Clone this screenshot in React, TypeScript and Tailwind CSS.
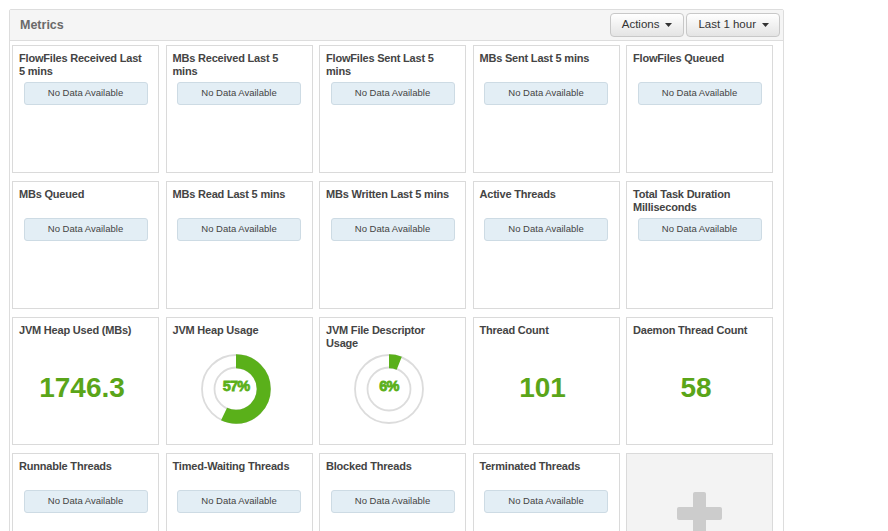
import React from "react";

type Card =
  | { title: string; kind: "nodata" }
  | { title: string; kind: "value"; value: string }
  | { title: string; kind: "gauge"; pct: number }
  | { title: string; kind: "add" };

const cards: Card[] = [
  { title: "FlowFiles Received Last 5 mins", kind: "nodata" },
  { title: "MBs Received Last 5 mins", kind: "nodata" },
  { title: "FlowFiles Sent Last 5 mins", kind: "nodata" },
  { title: "MBs Sent Last 5 mins", kind: "nodata" },
  { title: "FlowFiles Queued", kind: "nodata" },
  { title: "MBs Queued", kind: "nodata" },
  { title: "MBs Read Last 5 mins", kind: "nodata" },
  { title: "MBs Written Last 5 mins", kind: "nodata" },
  { title: "Active Threads", kind: "nodata" },
  { title: "Total Task Duration Milliseconds", kind: "nodata" },
  { title: "JVM Heap Used (MBs)", kind: "value", value: "1746.3" },
  { title: "JVM Heap Usage", kind: "gauge", pct: 57 },
  { title: "JVM File Descriptor Usage", kind: "gauge", pct: 6 },
  { title: "Thread Count", kind: "value", value: "101" },
  { title: "Daemon Thread Count", kind: "value", value: "58" },
  { title: "Runnable Threads", kind: "nodata" },
  { title: "Timed-Waiting Threads", kind: "nodata" },
  { title: "Blocked Threads", kind: "nodata" },
  { title: "Terminated Threads", kind: "nodata" },
  { title: "", kind: "add" },
];

function Gauge({ pct }: { pct: number }) {
  const r = 27.75;
  const c = 2 * Math.PI * r;
  return (
    <svg width="72" height="72" viewBox="0 0 72 72">
      <circle cx="36" cy="36" r="34" fill="#fff" stroke="#dcdcdc" strokeWidth="1.8" />
      <circle cx="36" cy="36" r="21.5" fill="#fff" stroke="#dcdcdc" strokeWidth="1.8" />
      <circle
        cx="36"
        cy="36"
        r={r}
        fill="none"
        stroke="#5ab01a"
        strokeWidth="14"
        strokeDasharray={`${(pct / 100) * c} ${c}`}
        transform="rotate(-90 36 36)"
      />
      <text
        x="36"
        y="38"
        textAnchor="middle"
        fontFamily="'Liberation Sans', Arial, sans-serif"
        fontWeight="bold"
        fontSize="14.5"
        letterSpacing="-0.8"
        fill="#5ab01a"
        stroke="#5ab01a"
        strokeWidth="0.8"
      >
        {pct}%
      </text>
    </svg>
  );
}

function Caret() {
  return (
    <svg width="7" height="4" viewBox="0 0 7 4" className="ml-[6px]">
      <path d="M0 0 L7 0 L3.5 4 Z" fill="#333" />
    </svg>
  );
}

function MetricCard({ card }: { card: Card }) {
  if (card.kind === "add") {
    return (
      <div className="h-[128px] border border-[#dadada] bg-[#f3f3f3] flex justify-center">
        <div className="relative mt-[38px] w-[45px] h-[45px]">
          <div className="absolute left-[16px] top-0 w-[13px] h-[45px] rounded-[2px] bg-[#cccccc]" />
          <div className="absolute left-0 top-[15px] w-[45px] h-[13px] rounded-[2px] bg-[#cccccc]" />
        </div>
      </div>
    );
  }
  return (
    <div className="h-[128px] border border-[#dadada] bg-white pl-[6px] pr-[6px] pt-[6px] flex flex-col">
      <div className="h-[26px] pr-[4px] text-[11px] leading-[13px] tracking-[-0.2px] font-bold text-[#444]">
        {card.title}
      </div>
      {card.kind === "nodata" && (
        <div className="mt-[4px] mx-auto w-[124px] h-[23px] rounded-[3px] border border-[#cddbe4] bg-[#e3eef5] flex items-center justify-center text-[9.5px] text-[#444]">
          No Data Available
        </div>
      )}
      {card.kind === "value" && (
        <div className="mt-[22px] pr-[7px] text-center text-[28px] leading-[32px] font-bold text-[#5aa519]">
          {card.value}
        </div>
      )}
      {card.kind === "gauge" && (
        <div className="mt-[3px] pr-[7px] flex justify-center">
          <Gauge pct={card.pct} />
        </div>
      )}
    </div>
  );
}

export default function App() {
  return (
    <div
      className="w-[888px] h-[531px] overflow-hidden bg-white pl-[9px] pt-[9px]"
      style={{ fontFamily: "'Liberation Sans', Arial, sans-serif" }}
    >
      <div className="w-[775px] border border-[#dddddd] rounded-t-[2px]">
        <div className="h-[31px] bg-[#f5f5f5] border-b border-[#dddddd] flex items-center justify-between pl-[10px] pr-[3px]">
          <div className="text-[12.5px] font-bold text-[#6a6a6a]">Metrics</div>
          <div className="flex gap-[2px]">
            <button className="h-[24px] px-[11px] flex items-center rounded-[4px] border border-[#c8c8c8] bg-gradient-to-b from-white to-[#e4e4e4] text-[11.5px] text-[#333]">
              Actions
              <Caret />
            </button>
            <button className="h-[24px] pl-[11px] pr-[10px] flex items-center rounded-[4px] border border-[#c8c8c8] bg-gradient-to-b from-white to-[#e4e4e4] text-[11.5px] text-[#333]">
              Last 1 hour
              <Caret />
            </button>
          </div>
        </div>
        <div className="pl-[2px] pt-[4px] grid grid-cols-[repeat(5,147px)] gap-x-[6.5px] gap-y-[8px] pb-[10px]">
          {cards.map((c, i) => (
            <MetricCard key={i} card={c} />
          ))}
        </div>
      </div>
    </div>
  );
}
